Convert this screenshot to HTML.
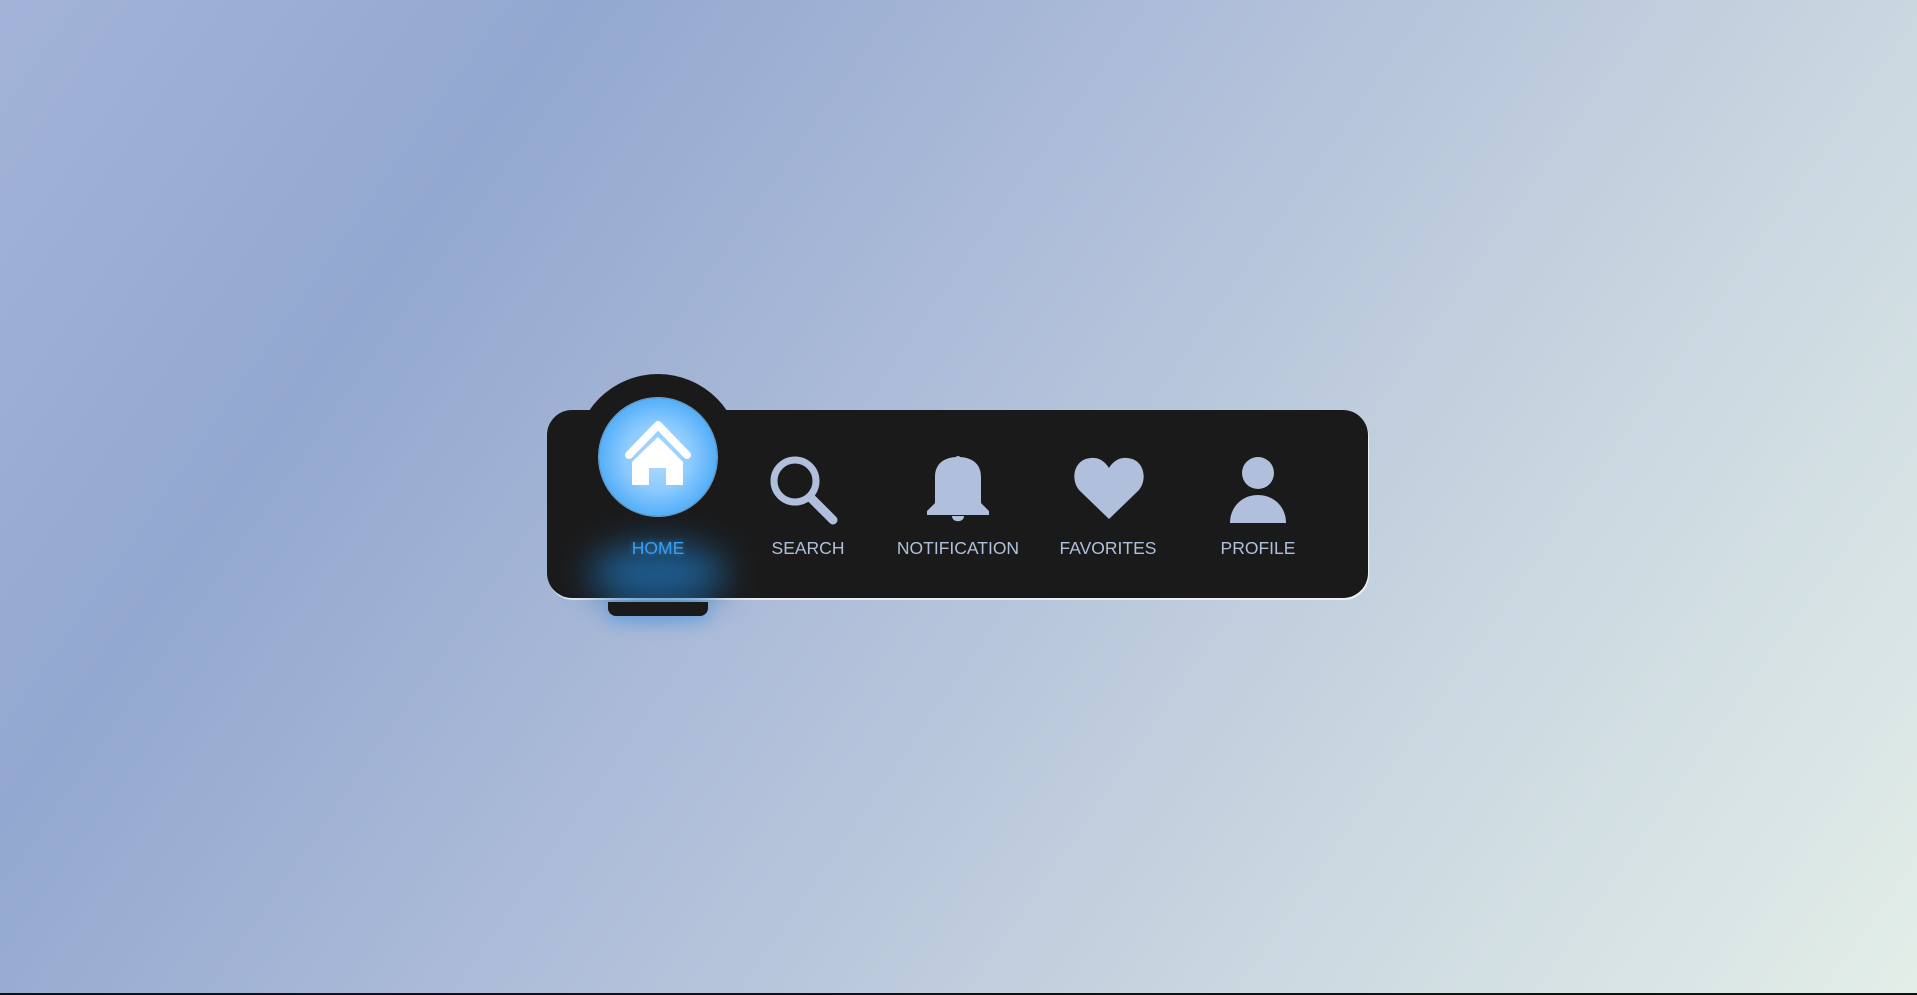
<!DOCTYPE html>
<html><head><meta charset="utf-8"><style>
html,body{margin:0;padding:0;width:1917px;height:995px;overflow:hidden}
body{background:linear-gradient(125deg,#a3b3d8 0%,#93a8d0 22%,#b2c0da 50%,#c8d6e0 72%,#e3eee8 100%);position:relative;font-family:"Liberation Sans",sans-serif}
.bar{position:absolute;left:0;bottom:0;width:1917px;height:2px;background:#111}
.nav{position:absolute;left:547px;top:410px;width:821px;height:188px;background:#1a1a1a;border-radius:25px;box-shadow:1px 2px 0 rgba(255,255,255,.7)}
.bump{position:absolute;left:575px;top:374px;width:166px;height:166px;border-radius:50%;background:#1a1a1a}
.glow{position:absolute;left:590px;top:545px;width:136px;height:58px;border-radius:50%;background:#1e6aa8;filter:blur(18px);opacity:.85}
.ind{position:absolute;left:608px;top:602px;width:100px;height:14px;background:#1a1a1a;border-radius:0 0 8px 8px;box-shadow:0 4px 16px rgba(60,150,240,.6)}
.circ{position:absolute;left:599px;top:398px;width:118px;height:118px;border-radius:50%;background:radial-gradient(circle,#b5ddff 0%,#8ccaff 40%,#3aa2f5 85%,#2e95ea 100%);box-shadow:0 0 0 1px #6aa0cc}
.lbl{position:absolute;top:538px;width:150px;text-align:center;font-size:17.5px;color:#b0c0dc}
svg{position:absolute}
</style></head><body>
<div class="bump"></div>
<div class="nav"></div>
<div class="glow"></div>
<div class="ind"></div>
<div class="circ"></div>
<svg style="left:620px;top:415px" width="76" height="75" viewBox="0 0 76 75">
<path d="M9 40 L38 10 L67 40" fill="none" stroke="#fff" stroke-width="8" stroke-linecap="round" stroke-linejoin="round"/>
<path d="M38 22 L12 47 V70 H29 V53 H46 V70 H63 V47 Z" fill="#fff"/>
</svg>
<svg style="left:768px;top:455px" width="74" height="72" viewBox="0 0 74 72">
<circle cx="27" cy="26" r="21" fill="none" stroke="#b0c0dc" stroke-width="7"/>
<path d="M43 43 L65 65" stroke="#b0c0dc" stroke-width="9" stroke-linecap="round"/>
</svg>
<svg style="left:925px;top:455px" width="66" height="70" viewBox="0 0 66 70">
<circle cx="33" cy="4" r="3" fill="#b0c0dc"/>
<path d="M33 2 C20 2 10 8 10 22 V48 L2 56 V60 H64 V56 L56 48 V22 C56 8 46 2 33 2Z" fill="#b0c0dc"/>
<path d="M27 61 H39 C39 68 27 68 27 61Z" fill="#b0c0dc"/>
</svg>
<svg style="left:1072px;top:455px" width="74" height="66" viewBox="0 0 74 66">
<path d="M37 64 L8 36 C-2 26 1 4 19 3 C28 2 34 8 37 13 C40 8 46 2 55 3 C73 4 76 26 66 36 Z" fill="#b0c0dc"/>
</svg>
<svg style="left:1228px;top:455px" width="60" height="70" viewBox="0 0 60 70">
<circle cx="30" cy="18" r="16" fill="#b0c0dc"/>
<path d="M2 68 C2 52 14 40 30 40 C46 40 58 52 58 68 Z" fill="#b0c0dc"/>
</svg>
<div class="lbl" style="left:583px;color:#3d9ff0;text-shadow:0 0 6px rgba(60,160,240,.6)">HOME</div>
<div class="lbl" style="left:733px">SEARCH</div>
<div class="lbl" style="left:883px">NOTIFICATION</div>
<div class="lbl" style="left:1033px">FAVORITES</div>
<div class="lbl" style="left:1183px">PROFILE</div>
<div class="bar"></div>
</body></html>
